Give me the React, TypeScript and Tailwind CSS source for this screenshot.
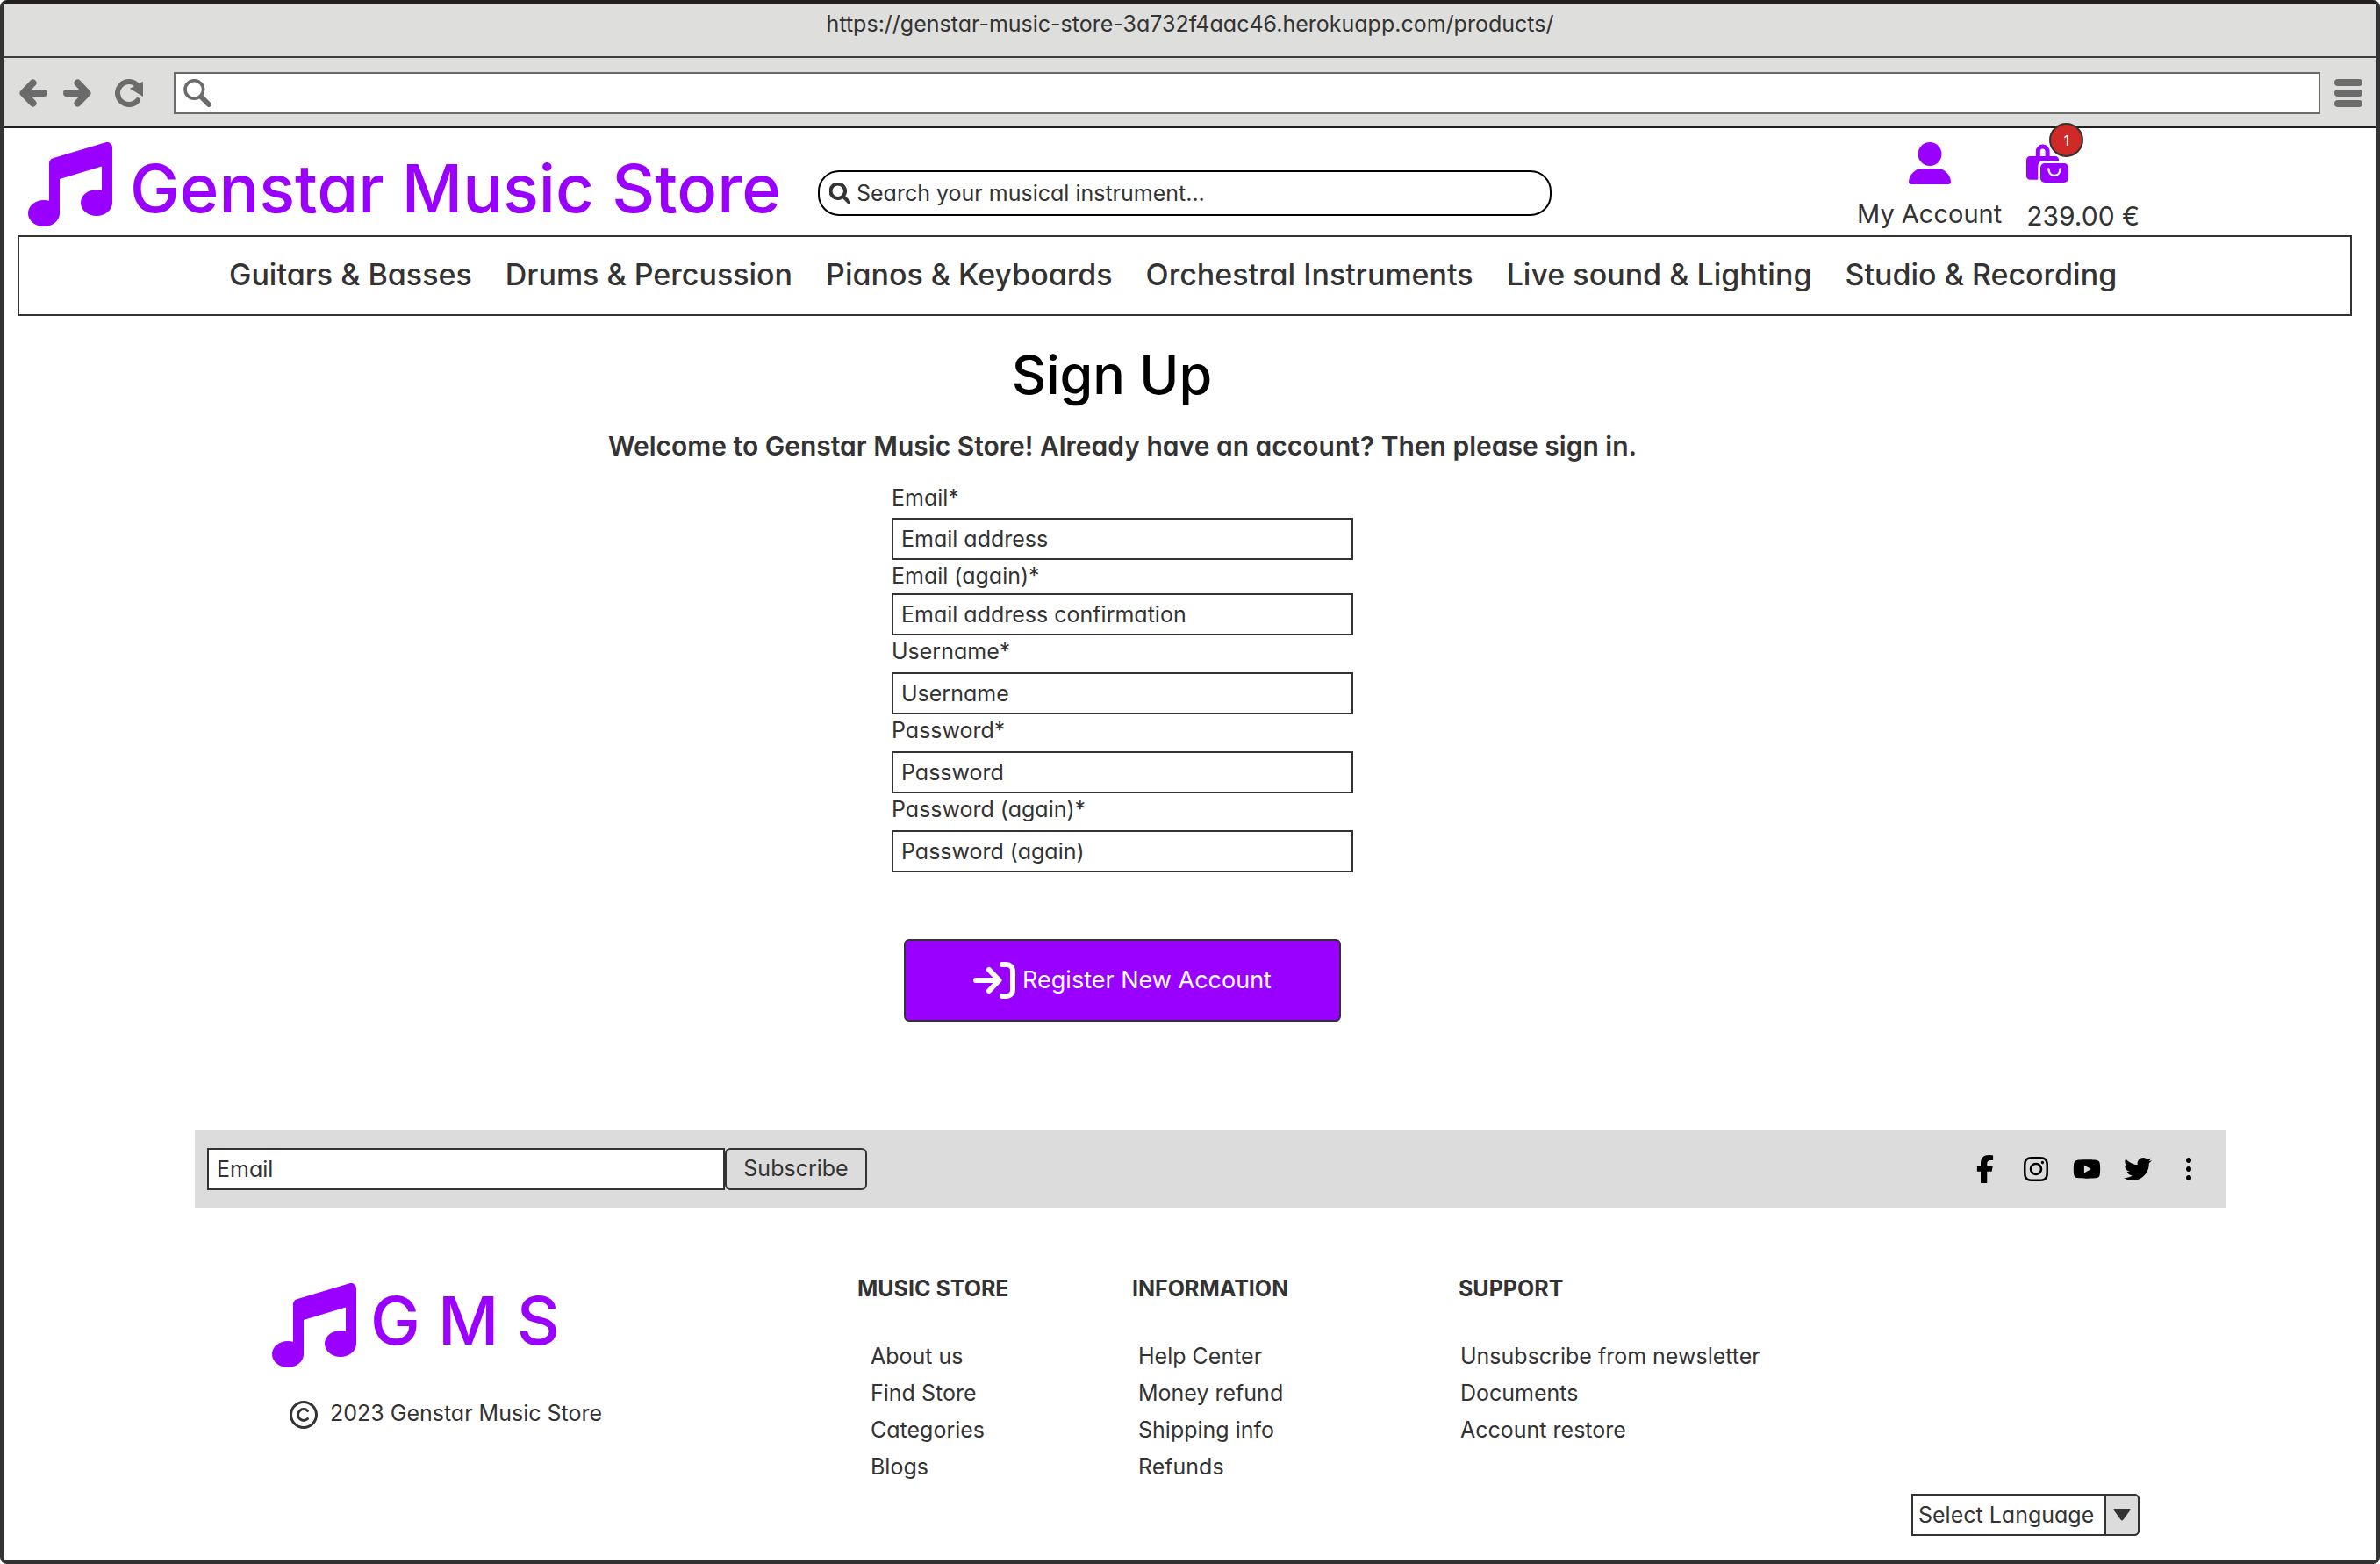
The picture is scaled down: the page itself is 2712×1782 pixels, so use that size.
import { FaFacebookF, FaInstagram, FaMagnifyingGlass, FaMusic, FaTwitter, FaYoutube } from 'react-icons/fa6';
import { BsThreeDotsVertical } from 'react-icons/bs';

const categories = [
  'Guitars & Basses',
  'Drums & Percussion',
  'Pianos & Keyboards',
  'Orchestral Instruments',
  'Live sound & Lighting',
  'Studio & Recording',
];

const fields = [
  { id: 'email', label: 'Email*', hint: 'Email address', type: 'email', row: 'h-[41px]' },
  { id: 'email2', label: 'Email (again)*', hint: 'Email address confirmation', type: 'email', row: 'h-[38px]' },
  { id: 'username', label: 'Username*', hint: 'Username', type: 'text', row: 'h-[42px]' },
  { id: 'password', label: 'Password*', hint: 'Password', type: 'password', row: 'h-[42px]' },
  { id: 'password2', label: 'Password (again)*', hint: 'Password (again)', type: 'password', row: 'h-[42px]' },
];

const linkGroups = [
  { title: 'MUSIC STORE', indent: 'pl-[15px]', links: ['About us', 'Find Store', 'Categories', 'Blogs'] },
  { title: 'INFORMATION', indent: 'pl-[7px]', links: ['Help Center', 'Money refund', 'Shipping info', 'Refunds'] },
  { title: 'SUPPORT', indent: 'pl-[2px]', links: ['Unsubscribe from newsletter', 'Documents', 'Account restore'] },
];

const socials = [
  { name: 'Facebook', Icon: FaFacebookF, size: 'size-8' },
  { name: 'Instagram', Icon: FaInstagram, size: 'size-8' },
  { name: 'YouTube', Icon: FaYoutube, size: 'size-8' },
  { name: 'Twitter', Icon: FaTwitter, size: 'size-8' },
];

function ArrowIcon({ forward = false }: { forward?: boolean }) {
  return (
    <svg viewBox="0 0 32 32" className="size-8" fill="none" stroke="currentColor" strokeWidth="8" strokeLinecap="round" strokeLinejoin="round">
      {forward ? <path d="M4 16h22M16.500 4.500 27.500 16l-11 11.500" /> : <path d="M28 16H6M15.500 4.500 4.500 16l11 11.500" />}
    </svg>
  );
}

function ReloadIcon() {
  return (
    <svg viewBox="0 0 32 32" className="size-8" fill="none">
      <path d="M24.500 6.200A13 13 0 1 0 26 24.300" stroke="currentColor" strokeWidth="6" strokeLinecap="round" />
      <path d="M32 2.700V20L17 10.700z" fill="currentColor" />
    </svg>
  );
}

function LensIcon() {
  return (
    <svg viewBox="0 0 32 32" className="size-8" fill="none" stroke="currentColor" strokeLinecap="round">
      <circle cx="12.300" cy="12" r="10.300" strokeWidth="3.600" />
      <path d="m21 21 8 8" strokeWidth="6" />
    </svg>
  );
}

function MenuIcon() {
  return (
    <svg viewBox="0 0 32 32" className="size-8" fill="currentColor">
      <rect width="32" height="8" rx="4" />
      <rect y="12" width="32" height="8" rx="4" />
      <rect y="24" width="32" height="8" rx="4" />
    </svg>
  );
}

function UserIcon() {
  return (
    <svg viewBox="0 0 48 48" className="size-12" fill="currentColor">
      <circle cx="24" cy="13.500" r="13.500" />
      <path d="M16 30h16c9 0 16 7.500 16 15.500 0 1.500-1 2.500-2.500 2.500h-43C1 48 0 47 0 45.500 0 37.500 7 30 16 30z" />
    </svg>
  );
}

function BagsIcon() {
  return (
    <svg viewBox="0 0 48 48" className="size-12" fill="none">
      <path d="M13.300 17v-6.500a5.400 5.400 0 0 1 10.800 0V17" stroke="currentColor" strokeWidth="5" />
      <path d="M4.500 16h28.300c2.800 0 4.500 2 4.500 5.300H20c-4.200 0-6.700 2.700-6.700 6.700v14.700H4.500C1.700 42.700 0 41 0 38.200V20.500C0 17.700 1.700 16 4.500 16z" fill="currentColor" />
      <rect x="16" y="24" width="32" height="22" rx="5" fill="currentColor" />
      <path d="M25.300 30.500c.3 4.500 3 7.500 6.700 7.500s6.400-3 6.700-7.500" stroke="white" strokeWidth="2.400" strokeLinecap="round" />
    </svg>
  );
}

function LoginIcon() {
  return (
    <svg viewBox="0 0 48 42" className="h-[42px] w-12" fill="none" stroke="currentColor" strokeWidth="6" strokeLinecap="round" strokeLinejoin="round">
      <path d="M3 21h25M18 9l11.500 12L18 33M33 3h5a7 7 0 0 1 7 7v22a7 7 0 0 1-7 7h-5" />
    </svg>
  );
}

function CopyrightIcon() {
  return (
    <svg viewBox="0 0 32 32" className="size-8" fill="none" stroke="currentColor" strokeWidth="3" strokeLinecap="round">
      <circle cx="16" cy="16" r="14.500" />
      <path d="M20.500 11.500a6.400 6.400 0 1 0 0 9" />
    </svg>
  );
}

export default function App() {
  return (
    <div className="flex min-h-screen flex-col rounded-lg border-4 border-[#333] border-t-[#231f20] bg-white font-['Inter',sans-serif] text-[25px] leading-9 text-[#333] [font-feature-settings:'cv11']">
      <div className="h-[62px] border-b-2 border-[#404040] bg-[#dededc] text-center leading-[46px]">
        https://genstar-music-store-3a732f4aac46.herokuapp.com/products/
      </div>
      <div className="flex h-20 items-center border-b-2 border-[#231f20] bg-[#dededc] pt-[2px] pr-4 pl-[18px] text-[#6b6b6b]">
        <button aria-label="Back"><ArrowIcon /></button>
        <button aria-label="Forward" className="ml-[18px]"><ArrowIcon forward /></button>
        <button aria-label="Reload" className="ml-[27px]"><ReloadIcon /></button>
        <label className="ml-[35px] flex h-12 flex-1 items-center border-2 border-[#6b6b6b] bg-white pl-[9px]">
          <LensIcon />
          <input aria-label="Address" className="ml-2 h-full flex-1 outline-none" />
        </label>
        <button aria-label="Menu" className="ml-4"><MenuIcon /></button>
      </div>

      <header className="flex h-[122px] items-start">
        <a href="#" className="flex w-[928px] shrink-0 pt-4 pl-7 text-[#9900ff]">
          <FaMusic className="size-24" />
          <span className="ml-5 pt-1 text-[76px] leading-24 font-medium whitespace-nowrap">Genstar Music Store</span>
        </a>
        <label className="mt-12 flex h-[52px] w-[836px] items-center rounded-3xl border-2 border-black pl-[11px]">
          <FaMagnifyingGlass className="size-6 stroke-current stroke-[24px]" />
          <input placeholder="Search your musical instrument..." aria-label="Search" className="ml-[7px] flex-1 outline-none placeholder:text-[#333]" />
        </label>
        <a href="#" className="mt-4 ml-auto flex flex-col items-center">
          <span className="text-[#9900ff]"><UserIcon /></span>
          <span className="mt-4 text-[29px]">My Account</span>
        </a>
        <a href="#" className="relative mt-4 mr-[270px] ml-7 flex flex-col">
          <span className="text-[#9900ff]"><BagsIcon /></span>
          <span className="absolute -top-[22px] left-[26px] flex size-[39px] items-center justify-center rounded-full border-2 border-[#333] bg-[#cf2a27] text-base text-white">1</span>
          <span className="mt-[18px] text-[30px]">239.00 €</span>
        </a>
      </header>

      <nav className="mr-7 ml-4 flex h-[92px] items-center gap-[38px] border-2 border-[#333] pb-[2px] pl-[239px] text-[34px] font-medium whitespace-nowrap">
        {categories.map((c) => (
          <a key={c} href="#">{c}</a>
        ))}
      </nav>

      <main className="flex flex-col items-center pr-[154px]">
        <h1 className="mt-[35px] pr-6 text-[61px] leading-16 font-medium text-black">Sign Up</h1>
        <p className="mt-[29px] text-[30px] leading-10 font-semibold">
          Welcome to Genstar Music Store! Already have an account? Then please <a href="#">sign in.</a>
        </p>
        <form className="mt-[21px] flex w-[526px] flex-col">
          {fields.map((f) => (
            <div key={f.id} className="flex flex-col">
              <label htmlFor={f.id} className={f.row}>{f.label}</label>
              <input id={f.id} type={f.type} placeholder={f.hint} className="h-12 border-2 border-[#333] px-[9px] outline-none placeholder:text-[#333]" />
            </div>
          ))}
          <button type="button" className="mx-[14px] mt-[76px] flex h-[94px] items-center justify-center gap-2 rounded-md border-2 border-[#333] bg-[#9900ff] text-[27px] text-white">
            <LoginIcon />
            Register New Account
          </button>
        </form>
      </main>

      <footer>
        <div className="mt-[124px] mr-[172px] ml-[218px] flex h-[88px] items-center bg-[#dcdcdc] pr-[26px] pl-[14px]">
          <input type="email" placeholder="Email" aria-label="Newsletter email" className="h-12 w-[590px] border-2 border-[#333] bg-white px-[9px] outline-none placeholder:text-[#333]" />
          <button className="h-12 w-[162px] rounded-md border-2 border-[#333] pb-[2px]">Subscribe</button>
          <div className="ml-auto flex items-center gap-[26px] text-black">
            {socials.map(({ name, Icon, size }) => (
              <a key={name} href="#" aria-label={name} className="flex size-8 items-center justify-center">
                <Icon className={size} />
              </a>
            ))}
            <button aria-label="More"><BsThreeDotsVertical className="size-8" /></button>
          </div>
        </div>

        <div className="grid grid-cols-[667px_313px_372px_1fr] pt-[71px] pl-[306px]">
          <div className="pt-[15px]">
            <div className="flex text-[#9900ff]">
              <FaMusic className="size-24" />
              <span className="ml-4 text-[76px] leading-[84px] font-medium">G M S</span>
            </div>
            <div className="mt-[38px] ml-5 flex h-8 items-center">
              <CopyrightIcon />
              <span className="ml-[14px] pb-1">2023 Genstar Music Store</span>
            </div>
          </div>
          {linkGroups.map((g) => (
            <section key={g.title} className="leading-[42px]">
              <h2 className="font-bold">{g.title}</h2>
              <ul className={`mt-[35px] ${g.indent}`}>
                {g.links.map((l) => (
                  <li key={l}><a href="#">{l}</a></li>
                ))}
              </ul>
            </section>
          ))}
        </div>

        <div className="relative mt-[10px] mr-[270px] mb-7 ml-auto h-12 w-[260px]">
          <select aria-label="Language" className="h-full w-full appearance-none rounded-r-md border-2 border-[#333] bg-white pl-[6px] outline-none">
            <option>Select Language</option>
          </select>
          <span className="pointer-events-none absolute inset-y-0 right-0 flex w-10 items-center justify-center rounded-r-md border-2 border-[#333] bg-[#dcdcdc]">
            <svg viewBox="0 0 20 14" className="h-[14px] w-5" fill="currentColor">
              <path d="M1.500 0h17c1 0 1.500 1 .8 1.800l-8 11c-.7.9-1.900.9-2.600 0l-8-11C0 1 .5 0 1.500 0z" />
            </svg>
          </span>
        </div>
      </footer>
    </div>
  );
}
